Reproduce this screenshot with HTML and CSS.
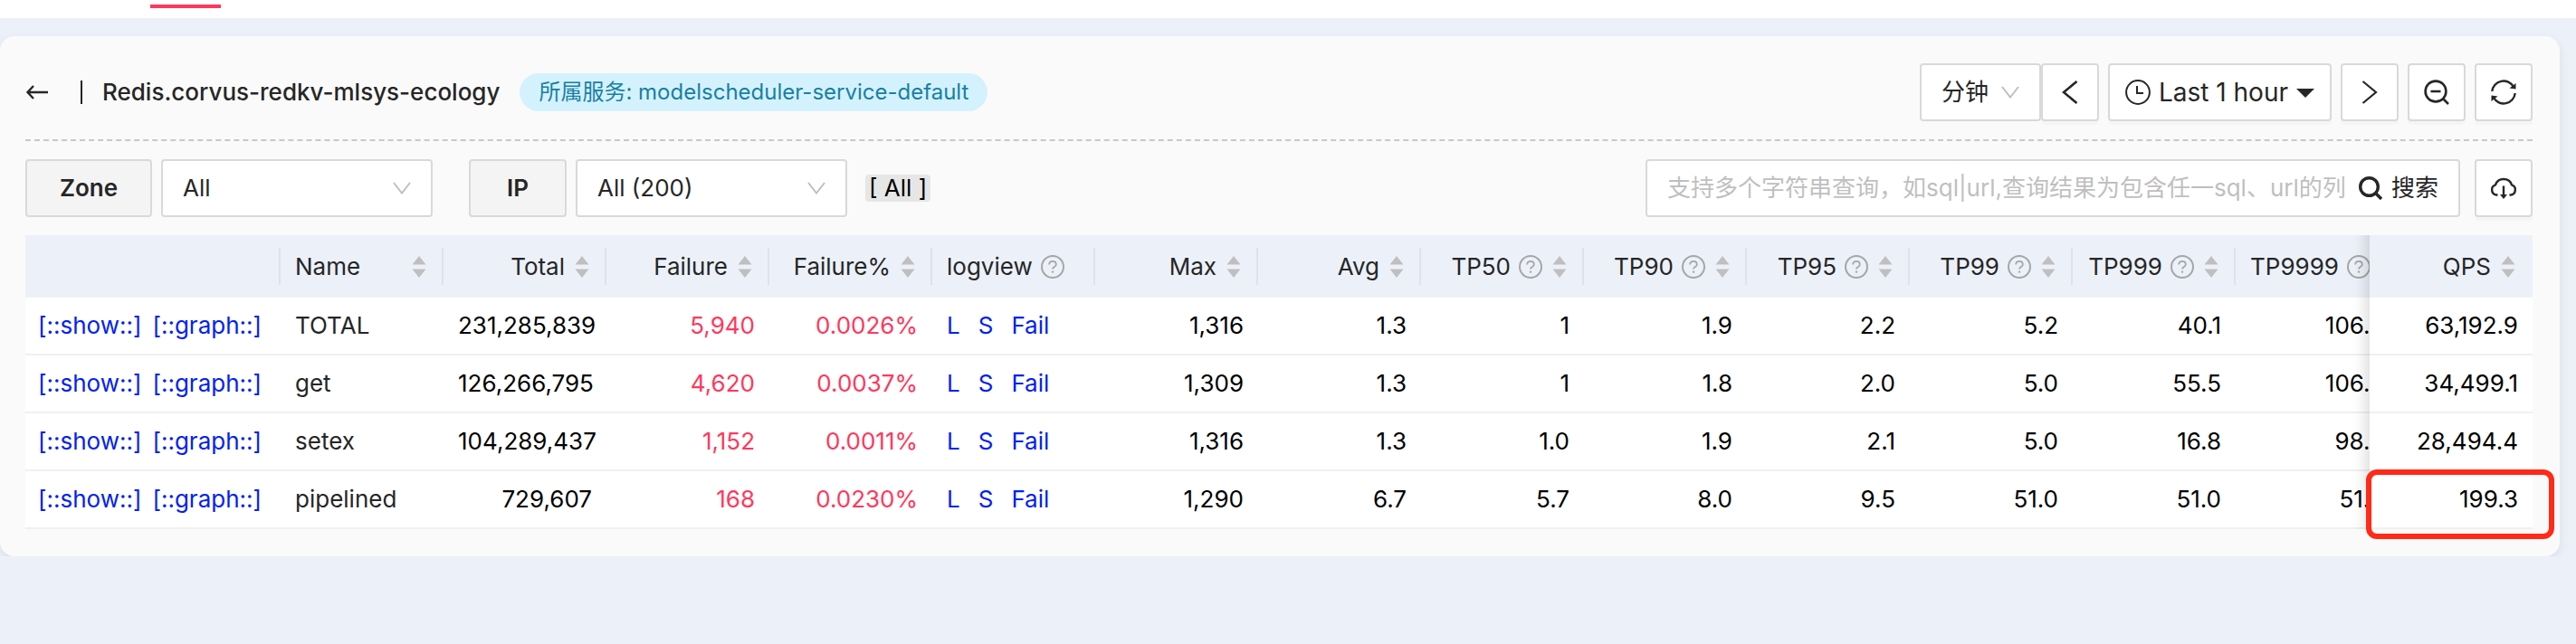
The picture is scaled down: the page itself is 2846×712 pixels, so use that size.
FILE: index.html
```html
<!DOCTYPE html>
<html lang="zh-CN">
<head>
    <meta charset="UTF-8">
    <meta name="viewport" content="width=device-width, initial-scale=1.0">
    <title>Redis.corvus-redkv-mlsys-ecology</title>
    <link rel="stylesheet" href="styles.css">
</head>
<body>
    <!-- shared icons -->
    <svg class="icon-defs" width="0" height="0" aria-hidden="true">
        <symbol id="icon-down" viewBox="0 0 20 14">
            <path d="M1 1l9 11.500L19 1" fill="none" stroke="currentColor" stroke-width="2"/>
        </symbol>
        <symbol id="icon-sort" viewBox="0 0 22 26">
            <path d="M11 1l7.500 9.500h-15zM11 25l7.500-9.500h-15z" fill="currentColor"/>
        </symbol>
        <symbol id="icon-help" viewBox="0 0 26 26">
            <circle cx="13" cy="13" r="12" fill="none" stroke="currentColor" stroke-width="2"/>
            <path d="M9.200 10.500c0-2.200 1.600-3.600 3.800-3.600s3.800 1.400 3.800 3.500c0 2.600-3.800 2.700-3.800 5.100" fill="none" stroke="currentColor" stroke-width="1.800"/>
            <circle cx="13" cy="18.600" r="1.200" fill="currentColor"/>
        </symbol>
    </svg>

    <nav class="topbar">
        <a class="tab-active" href="#" aria-label="Redis"></a>
    </nav>

    <main class="card">
        <header class="card-header">
            <button class="back" type="button" aria-label="返回">
                <svg width="26" height="20" viewBox="0 0 26 20"><path d="M25 10H3M9 3L2.500 10L9 17" fill="none" stroke="currentColor" stroke-width="2.400"/></svg>
            </button>
            <span class="divider"></span>
            <h1>Redis.corvus-redkv-mlsys-ecology</h1>
            <span class="tag">所属服务: modelscheduler-service-default</span>

            <div class="time-tools">
                <div class="select unit">
                    <select aria-label="时间粒度"><option>分钟</option></select>
                    <svg class="arrow"><use href="#icon-down"/></svg>
                </div>
                <button class="btn square" type="button" aria-label="向前">
                    <svg width="18" height="26" viewBox="0 0 18 26"><path d="M16.500 1L2 13l14.500 12" fill="none" stroke="currentColor" stroke-width="2.600"/></svg>
                </button>
                <button class="btn range" type="button">
                    <svg width="28" height="28" viewBox="0 0 28 28"><circle cx="14" cy="14" r="12.900" fill="none" stroke="currentColor" stroke-width="2"/><path d="M13 7v8h7" fill="none" stroke="currentColor" stroke-width="2"/></svg>
                    <span>Last 1 hour</span>
                    <svg width="20" height="12" viewBox="0 0 20 12"><path d="M0 2h20L10 12z" fill="currentColor"/></svg>
                </button>
                <button class="btn square" type="button" aria-label="向后">
                    <svg width="18" height="26" viewBox="0 0 18 26"><path d="M1.500 1L16 13L1.500 25" fill="none" stroke="currentColor" stroke-width="2.200"/></svg>
                </button>
                <button class="btn square" type="button" aria-label="缩小">
                    <svg width="28" height="28" viewBox="0 0 28 28"><circle cx="13" cy="13" r="11.400" fill="none" stroke="currentColor" stroke-width="2.600"/><path d="M7.500 13h11M21 21l6 6" fill="none" stroke="currentColor" stroke-width="2.600"/></svg>
                </button>
                <button class="btn square" type="button" aria-label="刷新">
                    <svg width="28" height="28" viewBox="0 0 28 28"><path d="M1.300 13A12.700 12.700 0 0 1 25 8M26.700 15A12.700 12.700 0 0 1 3 20" fill="none" stroke="currentColor" stroke-width="2.400"/><path d="M27.500 4v6.500l-7-1zM.500 24v-6.500l7 1z" fill="currentColor"/></svg>
                </button>
            </div>
        </header>

        <section class="filters">
            <label class="filter-label" for="zone">Zone</label>
            <div class="select">
                <select id="zone"><option>All</option></select>
                <svg class="arrow"><use href="#icon-down"/></svg>
            </div>
            <label class="filter-label ip" for="ip">IP</label>
            <div class="select">
                <select id="ip"><option>All (200)</option></select>
                <svg class="arrow"><use href="#icon-down"/></svg>
            </div>
            <span class="picked">[ All ]</span>

            <form class="search">
                <input type="text" aria-label="搜索" placeholder="支持多个字符串查询，如sql|url,查询结果为包含任一sql、url的列">
                <button type="button">
                    <svg width="26" height="26" viewBox="0 0 26 26"><circle cx="11.500" cy="11.500" r="9.800" fill="none" stroke="currentColor" stroke-width="3.400"/><path d="M18 18l7 7" fill="none" stroke="currentColor" stroke-width="3.400"/></svg>
                    搜索
                </button>
            </form>
            <button class="btn square" type="button" aria-label="下载">
                <svg width="30" height="26" viewBox="0 0 30 26"><path d="M8.500 20.500H7A5.800 5.800 0 0 1 6 9.300A9.600 9.600 0 0 1 24 9.300A5.800 5.800 0 0 1 23 20.500H21.500" fill="none" stroke="currentColor" stroke-width="2.400"/><path d="M15 10.500v11" stroke="currentColor" stroke-width="2.400"/><path d="M11 20h8l-4 5z" fill="currentColor"/></svg>
            </button>
        </section>

        <div class="table-wrap">
            <table>
                <colgroup><col class="col-actions"></colgroup>
                <thead>
                    <tr>
                        <th aria-label="操作"></th>
                        <th class="spread"><div>Name<svg class="sort"><use href="#icon-sort"/></svg></div></th>
                        <th><div>Total<svg class="sort"><use href="#icon-sort"/></svg></div></th>
                        <th><div>Failure<svg class="sort"><use href="#icon-sort"/></svg></div></th>
                        <th><div>Failure%<svg class="sort"><use href="#icon-sort"/></svg></div></th>
                        <th class="left"><div>logview<svg class="help"><use href="#icon-help"/></svg></div></th>
                        <th><div>Max<svg class="sort"><use href="#icon-sort"/></svg></div></th>
                        <th><div>Avg<svg class="sort"><use href="#icon-sort"/></svg></div></th>
                        <th><div>TP50<svg class="help"><use href="#icon-help"/></svg><svg class="sort"><use href="#icon-sort"/></svg></div></th>
                        <th><div>TP90<svg class="help"><use href="#icon-help"/></svg><svg class="sort"><use href="#icon-sort"/></svg></div></th>
                        <th><div>TP95<svg class="help"><use href="#icon-help"/></svg><svg class="sort"><use href="#icon-sort"/></svg></div></th>
                        <th><div>TP99<svg class="help"><use href="#icon-help"/></svg><svg class="sort"><use href="#icon-sort"/></svg></div></th>
                        <th><div>TP999<svg class="help"><use href="#icon-help"/></svg><svg class="sort"><use href="#icon-sort"/></svg></div></th>
                        <th><div>TP9999<svg class="help"><use href="#icon-help"/></svg><svg class="sort"><use href="#icon-sort"/></svg></div></th>
                        <th class="fixed"><div>QPS<svg class="sort"><use href="#icon-sort"/></svg></div></th>
                    </tr>
                </thead>
                <tbody>
                    <tr>
                        <td class="actions"><a href="#">[::show::]</a><a href="#">[::graph::]</a></td>
                        <td class="name">TOTAL</td>
                        <td>231,285,839</td>
                        <td class="fail">5,940</td>
                        <td class="fail">0.0026%</td>
                        <td class="logs"><a href="#">L</a><a href="#">S</a><a href="#">Fail</a></td>
                        <td>1,316</td>
                        <td>1.3</td>
                        <td>1</td>
                        <td>1.9</td>
                        <td>2.2</td>
                        <td>5.2</td>
                        <td>40.1</td>
                        <td>106.5</td>
                        <td class="fixed">63,192.9</td>
                    </tr>
                    <tr>
                        <td class="actions"><a href="#">[::show::]</a><a href="#">[::graph::]</a></td>
                        <td class="name">get</td>
                        <td>126,266,795</td>
                        <td class="fail">4,620</td>
                        <td class="fail">0.0037%</td>
                        <td class="logs"><a href="#">L</a><a href="#">S</a><a href="#">Fail</a></td>
                        <td>1,309</td>
                        <td>1.3</td>
                        <td>1</td>
                        <td>1.8</td>
                        <td>2.0</td>
                        <td>5.0</td>
                        <td>55.5</td>
                        <td>106.5</td>
                        <td class="fixed">34,499.1</td>
                    </tr>
                    <tr>
                        <td class="actions"><a href="#">[::show::]</a><a href="#">[::graph::]</a></td>
                        <td class="name">setex</td>
                        <td>104,289,437</td>
                        <td class="fail">1,152</td>
                        <td class="fail">0.0011%</td>
                        <td class="logs"><a href="#">L</a><a href="#">S</a><a href="#">Fail</a></td>
                        <td>1,316</td>
                        <td>1.3</td>
                        <td>1.0</td>
                        <td>1.9</td>
                        <td>2.1</td>
                        <td>5.0</td>
                        <td>16.8</td>
                        <td>98.5</td>
                        <td class="fixed">28,494.4</td>
                    </tr>
                    <tr>
                        <td class="actions"><a href="#">[::show::]</a><a href="#">[::graph::]</a></td>
                        <td class="name">pipelined</td>
                        <td>729,607</td>
                        <td class="fail">168</td>
                        <td class="fail">0.0230%</td>
                        <td class="logs"><a href="#">L</a><a href="#">S</a><a href="#">Fail</a></td>
                        <td>1,290</td>
                        <td>6.7</td>
                        <td>5.7</td>
                        <td>8.0</td>
                        <td>9.5</td>
                        <td>51.0</td>
                        <td>51.0</td>
                        <td>51.0</td>
                        <td class="fixed">199.3</td>
                    </tr>
                </tbody>
            </table>
        </div>

        <div class="highlight"></div>
    </main>
</body>
</html>
```

FILE: styles.css
```css
* {
    box-sizing: border-box;
}
body {
    margin: 0;
    background: #ecf1f9;
    color: #262626;
    font-family: Inter, "Noto Sans CJK SC", sans-serif;
    font-size: 26px;
    line-height: 36px;
}
button, input, select {
    font: inherit;
    color: inherit;
}
button {
    cursor: pointer;
}
a {
    color: #0021f5;
    text-decoration: none;
}
svg {
    display: block;
    flex: none;
}
.icon-defs {
    position: absolute;
}
.topbar {
    height: 20px;
    padding: 5px 166px;
    background: #fff;
}
.tab-active {
    display: block;
    width: 78px;
    height: 4px;
    background: #ff385c;
}

.card {
    position: relative;
    margin: 20px 18px 0 0;
    padding: 30px 30px 30px 28px;
    background: #fafafa;
    border-radius: 16px;
    box-shadow: 0 4px 12px rgba(0, 0, 0, 0.08);
}
.card-header {
    display: flex;
    align-items: center;
    padding-bottom: 20px;
    border-bottom: 2px dashed #c8c8c8;
}
.back {
    padding: 0;
    border: 0;
    background: none;
}
.divider {
    width: 2px;
    height: 26px;
    margin: 0 22px 0 35px;
    background: #262626;
}
h1 {
    margin: 0;
    font-size: 26px;
    font-weight: 500;
}
.tag {
    margin-left: 22px;
    padding: 0 21px;
    border-radius: 21px;
    background: #d4f2fd;
    color: #1780a4;
    font-size: 24px;
    line-height: 42px;
}
.time-tools {
    display: flex;
    gap: 10px;
    margin-left: auto;
}

.btn {
    display: flex;
    align-items: center;
    justify-content: center;
    height: 64px;
    padding: 0;
    border: 2px solid #d9d9d9;
    border-radius: 4px;
    background: #fff;
    box-shadow: 0 4px 0 rgba(0, 0, 0, 0.02);
}
.square {
    width: 64px;
}
.range {
    gap: 9px;
    padding: 0 17px;
    font-size: 28px;
}
.select {
    position: relative;
    width: 300px;
}
.select select {
    width: 100%;
    height: 64px;
    padding: 0 50px 0 22px;
    border: 2px solid #d9d9d9;
    border-radius: 4px;
    background: #fff;
    appearance: none;
}
.select .arrow {
    position: absolute;
    top: 25px;
    right: 24px;
    width: 20px;
    height: 14px;
    color: #bfbfbf;
    pointer-events: none;
}
.unit {
    width: 134px;
    margin-right: -10px;
}

.filters {
    display: flex;
    align-items: center;
    margin: 20px 0;
}
.filter-label {
    width: 140px;
    height: 64px;
    margin-right: 10px;
    border: 2px solid #d9d9d9;
    border-radius: 4px;
    background: #f4f4f4;
    font-weight: 600;
    line-height: 60px;
    text-align: center;
}
.filter-label.ip {
    width: 108px;
    margin-left: 40px;
}
.picked {
    margin-left: 20px;
    padding: 0 4px;
    border-radius: 4px;
    background: #e6e6e6;
    color: #000;
    line-height: 30px;
}
.search {
    display: flex;
    width: 900px;
    height: 64px;
    margin: 0 16px 0 auto;
    border: 2px solid #d9d9d9;
    border-radius: 4px;
    background: #fff;
}
.search input {
    flex: 1;
    min-width: 0;
    margin-left: 22px;
    padding: 0;
    border: 0;
    outline: 0;
    background: none;
}
.search input::placeholder {
    color: #bfbfbf;
    opacity: 1;
}
.search button {
    display: flex;
    align-items: center;
    gap: 10px;
    padding: 0 22px 0 12px;
    border: 0;
    background: none;
}

.table-wrap {
    overflow-x: auto;
    scrollbar-width: none;
}
table {
    width: 100%;
    min-width: 2802px;
    table-layout: fixed;
    border-collapse: separate;
    border-spacing: 0;
}
.col-actions {
    width: 282px;
}
th, td {
    padding: 0 16px;
    text-align: right;
    white-space: nowrap;
}
th {
    position: relative;
    height: 69px;
    background: #ecf1f9;
    font-weight: 400;
}
th div {
    display: flex;
    align-items: center;
    justify-content: safe flex-end;
}
th.spread div {
    justify-content: space-between;
}
th.left div {
    justify-content: flex-start;
}
th:not(.fixed)::before {
    content: "";
    position: absolute;
    top: 14px;
    right: 0;
    width: 2px;
    height: 41px;
    background: rgba(0, 0, 0, 0.06);
}
.sort {
    width: 22px;
    height: 26px;
    margin-left: 8px;
    color: #bfbfbf;
}
.help {
    width: 26px;
    height: 26px;
    margin-left: 9px;
    color: #a6a6a6;
}
td {
    height: 64px;
    border-bottom: 2px solid #f0f0f0;
    background: #fff;
    color: #000;
}
td.actions, td.name, td.logs {
    text-align: left;
}
td.name {
    color: #262626;
}
td.fail {
    color: #ff385c;
}
td.logs a {
    margin-right: 20px;
}
td.actions {
    padding-left: 14px;
}
td.actions a {
    margin-right: 12px;
}
th.fixed, td.fixed {
    position: sticky;
    right: 0;
    z-index: 1;
}
.fixed::after {
    content: "";
    position: absolute;
    top: 0;
    bottom: -2px;
    left: -60px;
    width: 60px;
    box-shadow: inset -20px 0 16px -16px rgba(0, 0, 0, 0.15);
    pointer-events: none;
}
th.fixed::after {
    bottom: 0;
}

/* marks the QPS of the last row */
.highlight {
    position: absolute;
    right: 6px;
    bottom: 19px;
    z-index: 2;
    width: 208px;
    height: 77px;
    border: 6px solid #ff2a17;
    border-radius: 12px;
    pointer-events: none;
}
```
